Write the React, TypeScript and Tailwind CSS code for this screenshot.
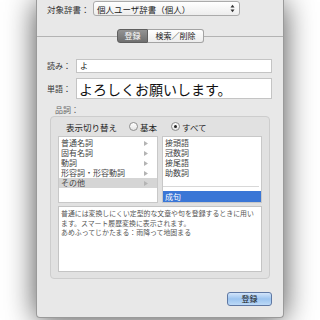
import React, { useState } from 'react';

const leftItems = ['普通名詞', '固有名詞', '動詞', '形容詞・形容動詞', 'その他'];
const rightItems = ['接頭語', '冠数詞', '接尾語', '助数詞'];

function Arrow() {
  return (
    <svg width="4" height="5" viewBox="0 0 4 5" className="shrink-0">
      <path d="M0 0 L4 2.5 L0 5 Z" fill="#b4b4b4" />
    </svg>
  );
}

function Radio({ checked, label }: { checked: boolean; label: string }) {
  return (
    <div className="flex items-center gap-[2px]">
      <div className="w-[9px] h-[9px] rounded-full border border-[#8e8e8e] bg-gradient-to-b from-white to-[#e4e4e4] flex items-center justify-center">
        {checked && <div className="w-[3px] h-[3px] rounded-full bg-[#222]" />}
      </div>
      <span className="text-[8.5px] text-[#222] leading-[10px]">{label}</span>
    </div>
  );
}

export default function App() {
  const [selected] = useState(4);

  return (
    <div
      className="w-[320px] h-[320px] overflow-hidden bg-white"
      style={{ fontFamily: '"Noto Sans CJK JP", "Noto Sans", sans-serif' }}
    >
      <div className="ml-[36px] w-[248px] h-[318px] bg-[#e8e8e8] rounded-b-[4px] border-x border-b border-[#9a9a9a] shadow-[0_2px_30px_rgba(0,0,0,0.7)] flex flex-col">
        {/* 対象辞書 */}
        <div className="mt-[1px] h-[15px] flex items-center pl-[10px]">
          <span className="w-[46px] text-[8.5px] text-[#333] leading-[10px]">対象辞書：</span>
          <div className="w-[147px] h-[15px] rounded-[3px] border border-[#ababab] bg-gradient-to-b from-white to-[#ededed] flex items-center pl-[3px] pr-[4px] justify-between">
            <span className="text-[8.5px] text-[#222] leading-[10px]">個人ユーザ辞書（個人）</span>
            <svg width="5" height="9" viewBox="0 0 5 9">
              <path d="M0.5 3.5 L2.5 0.8 L4.5 3.5 Z" fill="#333" />
              <path d="M0.5 5.5 L2.5 8.2 L4.5 5.5 Z" fill="#333" />
            </svg>
          </div>
        </div>

        {/* tabs */}
        <div className="mt-[13px] h-[14px] flex items-center">
          <div className="w-[80px] h-px bg-[#b3b3b3]" />
          <div className="flex h-[14px]">
            <div className="w-[31px] flex items-center justify-center rounded-l-[3px] border border-[#5f5f5f] bg-gradient-to-b from-[#939393] to-[#6f6f6f] text-[8px] text-white leading-[10px]">
              登録
            </div>
            <div className="w-[56px] flex items-center justify-center rounded-r-[3px] border border-l-0 border-[#a3a3a3] bg-gradient-to-b from-white to-[#ececec] text-[8px] text-[#222] leading-[10px]">
              検索／削除
            </div>
          </div>
          <div className="flex-1 h-px bg-[#b3b3b3]" />
        </div>

        {/* 読み */}
        <div className="mt-[16px] flex items-center pl-[10px]">
          <span className="w-[29px] text-[8px] text-[#333] leading-[10px]">読み：</span>
          <div className="w-[196px] h-[14px] bg-white border border-[#c4c4c4] flex items-center pl-[3px]">
            <span className="text-[8px] text-[#111] leading-[10px]">よ</span>
          </div>
        </div>

        {/* 単語 */}
        <div className="mt-[5px] flex items-center pl-[10px]">
          <span className="w-[29px] text-[8px] text-[#333] leading-[10px]">単語：</span>
          <div className="w-[196px] h-[21px] bg-white border border-[#c4c4c4] flex items-center pl-[2px]">
            <span className="text-[14px] text-[#111] leading-[18px]">よろしくお願いします。</span>
          </div>
        </div>

        {/* 品詞 */}
        <div className="mt-[6px] pl-[18px] h-[10px] flex items-center">
          <span className="text-[8px] text-[#666] leading-[10px]">品詞：</span>
        </div>

        <div className="ml-[13px] mt-[1px] w-[220px] h-[163px] rounded-[4px] border border-[#cdcdcd] bg-[#e1e1e1] flex flex-col pl-[7px]">
          <div className="h-[19px] flex items-center pl-[8px] gap-[12px]">
            <span className="text-[8.5px] text-[#222] leading-[10px]">表示切り替え</span>
            <div className="flex items-center gap-[14px]">
              <Radio checked={false} label="基本" />
              <Radio checked={true} label="すべて" />
            </div>
          </div>

          <div className="flex gap-[4px]">
            <div className="w-[100px] h-[67px] bg-white border border-[#c8c8c8] pt-[1px]">
              {leftItems.map((item, i) => (
                <div
                  key={item}
                  className={
                    'h-[10px] flex items-center justify-between pl-[2px] pr-[9px] ' +
                    (i === selected ? 'bg-[#d5d5d5]' : '')
                  }
                >
                  <span className="text-[8px] text-[#444] leading-[10px] whitespace-nowrap">{item}</span>
                  <Arrow />
                </div>
              ))}
            </div>
            <div className="w-[100px] h-[67px] bg-white border border-[#c8c8c8] pt-[1px] flex flex-col">
              {rightItems.map((item) => (
                <div key={item} className="h-[10px] flex items-center pl-[2px]">
                  <span className="text-[8px] text-[#444] leading-[10px]">{item}</span>
                </div>
              ))}
              <div className="mt-[8px] mr-[2px] h-px bg-[#d8d8d8]" />
              <div className="mt-[4px] h-[11px] bg-[#3a76d6] flex items-center pl-[2px]">
                <span className="text-[8px] text-white leading-[10px]">成句</span>
              </div>
            </div>
          </div>

          <div className="mt-[3px] w-[204px] h-[66px] bg-white border border-[#c4c4c4] px-[2px] pt-[2px] text-[6.9px] leading-[9.5px] text-[#555]">
            <div className="whitespace-nowrap">普通には変換しにくい定型的な文章や句を登録するときに用い</div>
            <div className="whitespace-nowrap">ます。スマート履歴変換に表示されます。</div>
            <div className="whitespace-nowrap">あめふってじかたまる：雨降って地固まる</div>
          </div>
        </div>

        <div className="mt-[13px] flex justify-end pr-[11px]">
          <button className="w-[45px] h-[14px] rounded-[3px] border border-[#5f78a3] bg-gradient-to-b from-[#d3e5fa] via-[#9cc4ef] to-[#bcd9f7] text-[8px] text-[#1a1a1a] leading-[10px] flex items-center justify-center">
            登録
          </button>
        </div>
      </div>
    </div>
  );
}
